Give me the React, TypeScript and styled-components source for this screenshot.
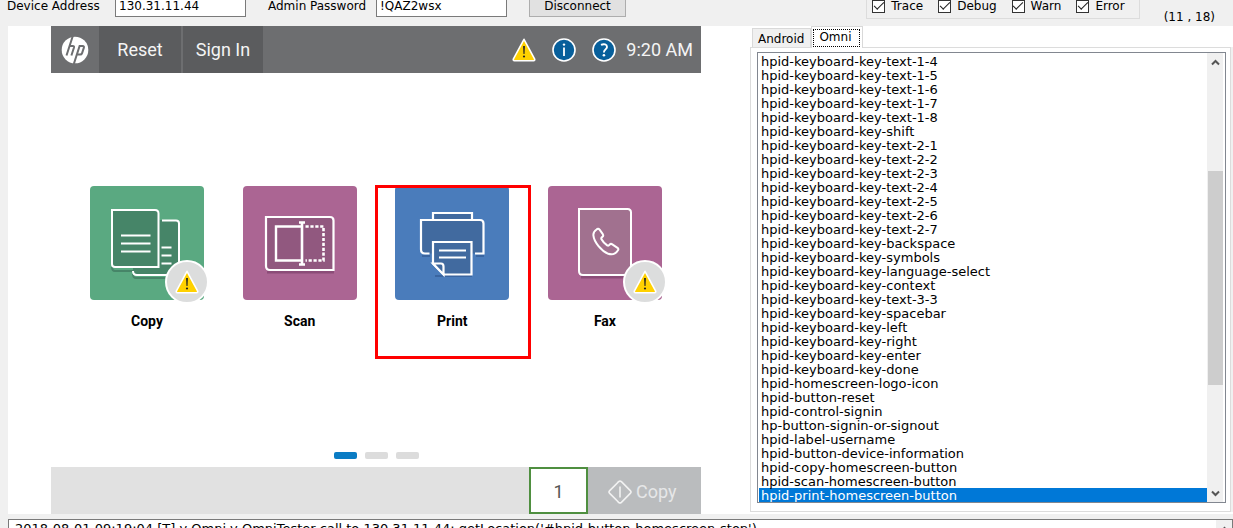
import React, { useState } from "react";
import styled, { createGlobalStyle } from "styled-components";

const GlobalStyle = createGlobalStyle`
  * { box-sizing: border-box; }
  body {
    margin: 0;
    background: #f0f0f0;
    color: #000;
    font: 12px/14px Verdana, "DejaVu Sans", sans-serif;
  }
  button, input, select, textarea { font: inherit; color: inherit; border-radius: 0; }
`;

const Window = styled.div`
  display: flex;
  flex-direction: column;
  height: 100vh;
  overflow: hidden;
`;

const Toolbar = styled.header`
  display: flex;
  align-items: flex-end;
  flex: none;
  height: 26px;
  padding: 0 18px 9px 7px;
  white-space: nowrap;
`;

const Field = styled.label`
  display: flex;
  align-items: center;
  margin-right: 22px;
  span { width: 108px; }
`;

const TextBox = styled.input`
  width: 131px;
  height: 22px;
  padding: 0 3px;
  border: 1px solid #7a7a7a;
  background: #fff;
`;

const PushButton = styled.button`
  width: 97px;
  height: 23px;
  padding: 0;
  border: 1px solid #adadad;
  background: #e1e1e1;
`;

const LogLevels = styled.fieldset`
  display: flex;
  gap: 15px;
  height: 34px;
  margin: 0 24px -2px auto;
  padding: 13px 14px 0 5px;
  border: 1px solid #dcdcdc;
`;

const CheckLabel = styled.label`
  display: flex;
  align-items: center;
  gap: 6px;
  height: 14px;
`;

const CheckBox = styled.input`
  appearance: none;
  width: 13px;
  height: 13px;
  margin: 0;
  border: 1px solid #333;
  background: #fff;
  display: grid;
  place-items: center;
  &:checked::after {
    content: "";
    width: 9px;
    height: 4px;
    margin-bottom: 3px;
    border-left: 1px solid #222;
    border-bottom: 1px solid #222;
    transform: rotate(-45deg);
  }
`;

const Cursor = styled.output`
  margin-bottom: -7px;
`;

const Main = styled.main`
  display: grid;
  grid-template-columns: minmax(0, 742fr) minmax(0, 483fr);
  flex: none;
  margin-left: 8px;
  background: #fff;
`;

const Preview = styled.section`
  display: flex;
  padding: 0 49px 0 43px;
`;

const Device = styled.div`
  display: flex;
  flex: 1;
  flex-direction: column;
  font-family: Roboto, sans-serif;
  font-size: 18px;
  line-height: 22px;
`;

const DeviceBar = styled.div`
  display: flex;
  align-items: center;
  height: 47px;
  padding-right: 8px;
  background: #6d6e70;
  color: #f4f4f4;
`;

const LogoButton = styled.button`
  display: grid;
  place-items: center;
  width: 48px;
  height: 47px;
  padding: 0;
  border: 0;
  background: none;
`;

const BarButton = styled.button`
  width: 82px;
  height: 47px;
  padding: 0;
  border: 0;
  background: #5b5c5e;
  & + & { border-left: 2px solid #6d6e70; }
`;

const Status = styled.div`
  display: flex;
  align-items: center;
  gap: 8px;
  margin-left: auto;
`;

const IconButton = styled.button`
  display: grid;
  place-items: center;
  width: 28px;
  padding: 0;
  border: 0;
  background: none;
`;

const Icons = styled.div`
  display: flex;
  gap: 12px;
`;

const Home = styled.div`
  display: flex;
  flex: 1;
  flex-direction: column;
  padding: 113px 39px 8px;
`;

const Tiles = styled.div`
  display: flex;
  justify-content: space-between;
`;

const Tile = styled.button`
  position: relative;
  width: 114px;
  padding: 0;
  border: 0;
  background: none;
  font-size: 14px;
  font-weight: 700;
  line-height: 20px;
`;

const TileFace = styled.span<{ $color: string }>`
  display: block;
  height: 114px;
  margin-bottom: 11px;
  border-radius: 4px;
  background: ${(p) => p.$color};
`;

const Badge = styled.span`
  position: absolute;
  top: 74px;
  right: -5px;
  display: grid;
  place-items: center;
  width: 44px;
  height: 44px;
  border: 2px solid #fff;
  border-radius: 50%;
  background: #dcdddd;
`;

const Highlight = styled.span`
  position: absolute;
  top: -1px;
  left: -20px;
  width: 156px;
  height: 174px;
  border: 3px solid #f00;
`;

const Pager = styled.div`
  display: flex;
  justify-content: center;
  gap: 8px;
  margin-top: auto;
`;

const PageDot = styled.button<{ $active?: boolean }>`
  width: 23px;
  height: 7px;
  padding: 0;
  border: 0;
  border-radius: 2px;
  background: ${(p) => (p.$active ? "#0a7cc4" : "#dcdcdc")};
`;

const DeviceFooter = styled.div`
  display: flex;
  justify-content: flex-end;
  height: 47px;
  background: #e1e1e1;
`;

const Copies = styled.input`
  width: 59px;
  height: 47px;
  padding: 2px 0 0;
  border: 2px solid #4f8f40;
  background: #fff;
  color: #555;
  text-align: center;
`;

const StartButton = styled.button`
  display: flex;
  align-items: center;
  gap: 4px;
  width: 113px;
  padding: 2px 0 0 20px;
  border: 0;
  background: #babcbe;
  color: #e6e7e8;
`;

const Inspector = styled.section`
  display: flex;
  flex-direction: column;
  padding: 0 2px 2px 0;
`;

const Tabs = styled.div`
  display: flex;
  align-items: flex-end;
  height: 21px;
  padding-left: 2px;
`;

const Tab = styled.button<{ $active: boolean }>`
  position: relative;
  height: ${(p) => (p.$active ? 22 : 19)}px;
  margin-bottom: ${(p) => (p.$active ? -1 : 0)}px;
  padding: ${(p) => (p.$active ? "2px 2px 1px 1px" : "0 6px 0 5px")};
  border: 1px solid #d9d9d9;
  border-bottom: 0;
  background: ${(p) => (p.$active ? "#fff" : "#f0f0f0")};
  span {
    display: block;
    padding: ${(p) => (p.$active ? "0 8px 2px 5px" : "1px 0 0")};
    border: ${(p) => (p.$active ? "1px dotted #000" : "0")};
  }
`;

const TabPanel = styled.div`
  flex: 1;
  padding: 4px 4px 8px 6px;
  border: 1px solid #dcdcdc;
  box-shadow: 2px 0 0 #f0f0f0;
`;

const ListFrame = styled.div`
  display: flex;
  padding: 0 2px 0 1px;
  border: 1px solid #828790;
`;

const ElementList = styled.select`
  flex: 1;
  min-width: 0;
  height: auto;
  margin: 1px 0 0;
  padding: 0;
  border: 0;
  outline: 0;
  background: #fff;
  font-size: 13px;
  scrollbar-width: none;
  option {
    height: 14px;
    min-height: 14px;
    padding: 0 2px;
    line-height: 14px;
  }
  option:checked {
    background: #0078d7 linear-gradient(#0078d7, #0078d7);
    color: #fff;
    -webkit-text-fill-color: #fff;
  }
`;

const ScrollTrack = styled.div`
  display: flex;
  flex-direction: column;
  width: 16px;
  background: #f0f0f0;
`;

const ScrollArrow = styled.button`
  display: grid;
  place-items: center;
  height: 18px;
  padding: 0;
  border: 0;
  background: none;
`;

const ScrollThumb = styled.div`
  flex: 214;
  align-self: flex-end;
  width: 15px;
  background: #cdcdcd;
`;

const Spacer = styled.div<{ $share: number }>`
  flex: ${(p) => p.$share};
`;

const LogFrame = styled.div`
  display: flex;
  flex: none;
  height: 90px;
  margin: 5px 0 0 8px;
  border: 1px solid #7a7a7a;
  background: #fff;
`;

const LogText = styled.textarea`
  flex: 1;
  padding: 2px 6px;
  border: 0;
  outline: 0;
  resize: none;
  background: #fff;
  font-size: 13px;
  white-space: pre;
  overflow: hidden;
`;

const WarningIcon = ({ size = 24 }: { size?: number }) => (
  <svg width={size} height={size} viewBox="0 0 24 24" aria-hidden="true">
    <path d="M12 1.3 22.7 21.2q.3 1.3-1.1 1.5H2.4Q1 22.500 1.300 21.200Z" fill="#ffd100" stroke="#fff" strokeWidth="1.6" strokeLinejoin="round" />
    <path d="M11.100 8h1.800l-.4 8h-1Z" fill="#222" />
    <circle cx="12" cy="18.500" r="1.100" fill="#222" />
  </svg>
);

const InfoIcon = () => (
  <svg width="24" height="24" viewBox="0 0 24 24" aria-hidden="true">
    <circle cx="12" cy="12" r="11" fill="#075f9b" stroke="#fff" strokeWidth="1.600" />
    <circle cx="12" cy="6.600" r="1.200" fill="#fff" />
    <path d="M12 9.500v8.500" stroke="#fff" strokeWidth="1.800" />
  </svg>
);

const HelpIcon = () => (
  <svg width="24" height="24" viewBox="0 0 24 24" aria-hidden="true">
    <circle cx="12" cy="12" r="11" fill="#075f9b" stroke="#fff" strokeWidth="1.600" />
    <path d="M9 6.900c3-1.400 6-.6 6 2 0 2.500-3.100 2.600-3.100 5.600" fill="none" stroke="#fff" strokeWidth="1.900" />
    <circle cx="11.900" cy="17.300" r="1.300" fill="#fff" />
  </svg>
);

const HpLogo = () => (
  <svg width="28" height="28" viewBox="0 0 28 28" role="img" aria-label="hp">
    <circle cx="14" cy="14" r="13.300" fill="#fff" />
    <g fill="none" stroke="#6d6e70" strokeWidth="2">
      <path d="M11.800 0 5.500 19.500M8.600 10h3.100q1.700 0 1.200 1.700L10.400 19.500" />
      <path d="M12.800 28 18.600 10h3q1.800 0 1.200 1.900l-1.700 5.200q-.5 1.500-2 1.500h-3.100" />
    </g>
  </svg>
);

const CopyArt = () => (
  <svg width="114" height="114" viewBox="0 0 114 114" aria-hidden="true">
    <g fill="none" stroke="#468568" strokeWidth="2" transform="translate(0 2)">
      <path d="M22 79q0 4 3 4h44M43 86q0 4 3 4h43" />
    </g>
    <path d="M50 34h37q2 0 2 2v53H46q-3 0-3-4V81h26V34Z" fill="#468568" />
    <path d="M72 34.500h14q3 0 3 3V89H47q-4 0-4-4" fill="none" stroke="#fff" strokeWidth="2" />
    <path d="M22 24h43q3.500 0 3.500 3.500V81H25q-3 0-3-3Z" fill="#468568" stroke="#fff" strokeWidth="2" />
    <path d="M31 49.500h29.500M31 57.500h29.500M31 65.500h29.500M71.500 61.500h10M71.500 69.500h10M71.500 77.500h10" stroke="#fff" strokeWidth="2.200" />
  </svg>
);

const ScanArt = () => (
  <svg width="114" height="114" viewBox="0 0 114 114" aria-hidden="true">
    <path d="M24 86h67" stroke="#8b4d78" strokeWidth="3" />
    <path d="M23 31h64q3.500 0 3.500 3.500V84H27q-4 0-4-4Z" fill="#91587f" stroke="#fff" strokeWidth="2.200" />
    <path d="M58 40.500H33v34h25" fill="none" stroke="#fff" strokeWidth="2.400" />
    <path d="M62.500 40.500h18v34h-18" fill="none" stroke="#fff" strokeWidth="2.600" strokeDasharray="3.200 1.700" />
    <path d="M59 36v43M56 36.500h6M56 78.500h6" stroke="#fff" strokeWidth="2.600" />
  </svg>
);

const PrintArt = () => (
  <svg width="114" height="114" viewBox="0 0 114 114" aria-hidden="true">
    <path d="M27 70h8M81 70h8M40 90h37" stroke="#3a65a0" strokeWidth="2" />
    <path d="M38 34v-7h39v7h9q2.500 0 2.500 3v30.500H77v21H49l-11-10V67.500H29q-3 0-3-3V34Z" fill="#416a9f" />
    <path d="M38 34v-7h39v7M34.500 67.500H30q-4 0-4-4V34h59q3.500 0 3.500 3.500v30H80" fill="none" stroke="#fff" strokeWidth="2.200" />
    <path d="M38 56h38.500v32.500H49L38 77.500Z" fill="#416a9f" stroke="#fff" strokeWidth="2.200" />
    <path d="M38 77.500h8q2.500 0 2.500 3v8Z" fill="#416a9f" stroke="#fff" strokeWidth="2.200" />
    <path d="M44 64.500h27M44 71.500h27" stroke="#fff" strokeWidth="2.200" />
  </svg>
);

const FaxArt = () => (
  <svg width="114" height="114" viewBox="0 0 114 114" aria-hidden="true">
    <path d="M33 91h50" stroke="#8b4d78" strokeWidth="3" />
    <path d="M31 23h48.500q3.500 0 3.500 3.500V89H35q-4 0-4-4Z" fill="#a1718f" stroke="#fff" strokeWidth="2" />
    <path d="M48.600 43.500q1.500-1.500 3 .2l3.200 4.500q1 1.500-.5 2.700-1.500 1.100-.8 2.300 1.500 3 5.700 6.200 1.300.8 2.400-.7 1.200-1.400 2.700-.4l5.200 3.500q1.500 1.200.3 2.700-3.600 5.300-9.500 3.300C53.500 65 46 56 45.400 49.300q-.3-3.600 3.200-5.800Z" fill="none" stroke="#fff" strokeWidth="2" strokeLinejoin="round" />
  </svg>
);

const StartIcon = () => (
  <svg width="24" height="24" viewBox="0 0 24 24" aria-hidden="true">
    <path d="M10.600 1.700q1.400-1.300 2.800 0l8.900 8.900q1.400 1.400 0 2.800l-8.900 8.900q-1.400 1.300-2.800 0l-8.900-8.900q-1.400-1.400 0-2.800ZM12 6.500v11" fill="none" stroke="#f2f2f2" strokeWidth="1.600" />
  </svg>
);

const Chevron = ({ down }: { down?: boolean }) => (
  <svg width="9" height="7" viewBox="0 0 9 7" aria-hidden="true">
    <path d={down ? "M1 1.500 4.500 5 8 1.500" : "M1 5.500 4.500 2 8 5.500"} fill="none" stroke="#555" strokeWidth="2" />
  </svg>
);

const tiles = [
  { name: "Copy", color: "#5aa981", Art: CopyArt, warning: true },
  { name: "Scan", color: "#ab6593", Art: ScanArt },
  { name: "Print", color: "#4a7cbb", Art: PrintArt, highlighted: true },
  { name: "Fax", color: "#ab6593", Art: FaxArt, warning: true },
];

const keys = [
  "text-1-4", "text-1-5", "text-1-6", "text-1-7", "text-1-8", "shift",
  "text-2-1", "text-2-2", "text-2-3", "text-2-4", "text-2-5", "text-2-6", "text-2-7",
  "backspace", "symbols", "language-select", "context", "text-3-3", "spacebar",
  "left", "right", "enter", "done",
];

const elementIds = [
  ...keys.map((key) => `hpid-keyboard-key-${key}`),
  "hpid-homescreen-logo-icon",
  "hpid-button-reset",
  "hpid-control-signin",
  "hp-button-signin-or-signout",
  "hpid-label-username",
  "hpid-button-device-information",
  "hpid-copy-homescreen-button",
  "hpid-scan-homescreen-button",
  "hpid-print-homescreen-button",
];

export default function App() {
  const [tab, setTab] = useState("Omni");

  return (
    <>
      <GlobalStyle />
      <Window>
        <Toolbar>
          <Field>
            <span>Device Address</span>
            <TextBox defaultValue="130.31.11.44" />
          </Field>
          <Field>
            <span>Admin Password</span>
            <TextBox defaultValue="!QAZ2wsx" />
          </Field>
          <PushButton>Disconnect</PushButton>
          <LogLevels>
            {["Trace", "Debug", "Warn", "Error"].map((level) => (
              <CheckLabel key={level}>
                <CheckBox type="checkbox" defaultChecked />
                {level}
              </CheckLabel>
            ))}
          </LogLevels>
          <Cursor>(11 , 18)</Cursor>
        </Toolbar>

        <Main>
          <Preview>
            <Device>
              <DeviceBar>
                <LogoButton><HpLogo /></LogoButton>
                <BarButton>Reset</BarButton>
                <BarButton>Sign In</BarButton>
                <Status>
                  <Icons>
                    <IconButton aria-label="Warnings"><WarningIcon /></IconButton>
                    <IconButton aria-label="Information"><InfoIcon /></IconButton>
                    <IconButton aria-label="Help"><HelpIcon /></IconButton>
                  </Icons>
                  <time>9:20 AM</time>
                </Status>
              </DeviceBar>
              <Home>
                <Tiles>
                  {tiles.map(({ name, color, Art, warning, highlighted }) => (
                    <Tile key={name}>
                      <TileFace $color={color}><Art /></TileFace>
                      {name}
                      {warning && <Badge><WarningIcon /></Badge>}
                      {highlighted && <Highlight />}
                    </Tile>
                  ))}
                </Tiles>
                <Pager>
                  <PageDot $active aria-label="Page 1" />
                  <PageDot aria-label="Page 2" />
                  <PageDot aria-label="Page 3" />
                </Pager>
              </Home>
              <DeviceFooter>
                <Copies aria-label="Copies" defaultValue="1" />
                <StartButton><StartIcon />Copy</StartButton>
              </DeviceFooter>
            </Device>
          </Preview>

          <Inspector>
            <Tabs role="tablist">
              {["Android", "Omni"].map((name) => (
                <Tab key={name} role="tab" aria-selected={tab === name} $active={tab === name} onClick={() => setTab(name)}>
                  <span>{name}</span>
                </Tab>
              ))}
            </Tabs>
            <TabPanel role="tabpanel">
              <ListFrame>
                <ElementList size={elementIds.length} aria-label="Elements" defaultValue="hpid-print-homescreen-button">
                  {elementIds.map((id) => <option key={id} value={id}>{id}</option>)}
                </ElementList>
                <ScrollTrack>
                  <ScrollArrow aria-label="Scroll up"><Chevron /></ScrollArrow>
                  <Spacer $share={100} />
                  <ScrollThumb />
                  <Spacer $share={99} />
                  <ScrollArrow aria-label="Scroll down"><Chevron down /></ScrollArrow>
                </ScrollTrack>
              </ListFrame>
            </TabPanel>
          </Inspector>
        </Main>

        <LogFrame>
          <LogText
            readOnly
            aria-label="Log"
            defaultValue="2018-08-01 09:19:04 [T] v Omni v OmniTester call to 130.31.11.44: getLocation('#hpid-button-homescreen-stop')"
          />
          <ScrollTrack>
            <ScrollArrow aria-label="Scroll log up"><Chevron /></ScrollArrow>
          </ScrollTrack>
        </LogFrame>
      </Window>
    </>
  );
}
